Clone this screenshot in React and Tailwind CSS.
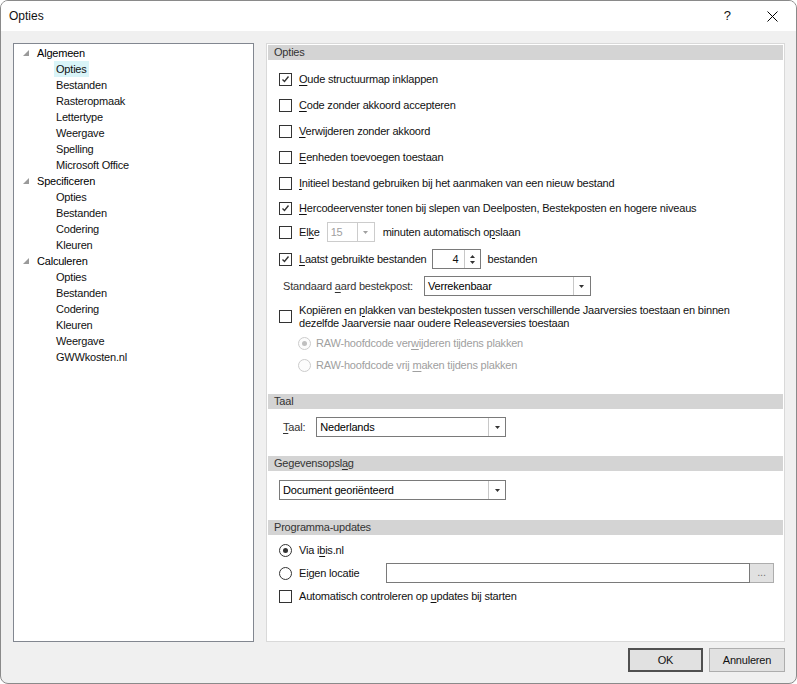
import React from 'react';

const font = { fontFamily: '"Liberation Sans", Arial, sans-serif' };

const U = ({ children }) => <span className="underline underline-offset-[2px]">{children}</span>;

const Check = ({ checked }) => (
  <div className="w-[13px] h-[13px] shrink-0 border border-[#333333] bg-white flex items-center justify-center">
    {checked && (
      <svg width="9" height="9" viewBox="0 0 9 9">
        <polyline points="1.5,4.5 3.5,6.5 7.5,1.5" fill="none" stroke="#333333" strokeWidth="1.4" />
      </svg>
    )}
  </div>
);

const Radio = ({ checked, disabled }) => (
  <div
    className={`w-[13px] h-[13px] shrink-0 rounded-full border flex items-center justify-center ${
      disabled ? 'border-[#cccccc] bg-[#fcfcfc]' : 'border-[#333333] bg-white'
    }`}
  >
    {checked && <div className={`w-[5px] h-[5px] rounded-full ${disabled ? 'bg-[#bfbfbf]' : 'bg-[#333333]'}`} />}
  </div>
);

const Arrow = ({ color = '#333333' }) => (
  <svg width="5" height="3" viewBox="0 0 5 3">
    <polygon points="0,0 5,0 2.5,3" fill={color} />
  </svg>
);

const Select = ({ value, className, disabled }) => (
  <div
    className={`h-[20px] flex bg-white border ${disabled ? 'border-[#cccccc] text-[#a0a0a0]' : 'border-[#7a7a7a] text-black'} ${className}`}
  >
    <div className="flex-1 px-[3px] flex items-center">{value}</div>
    <div className={`w-[17px] border-l flex items-center justify-center ${disabled ? 'border-[#cccccc]' : 'border-[#c8c8c8]'}`}>
      <Arrow color={disabled ? '#a0a0a0' : '#333333'} />
    </div>
  </div>
);

const Header = ({ children }) => (
  <div className="h-[15px] mx-px bg-[#d4d4d4] text-[#333333] pl-[6px] flex items-center leading-none">{children}</div>
);

const Row = ({ h, children, className = '' }) => (
  <div className={`flex items-center pl-[12px] ${className}`} style={{ height: h }}>
    {children}
  </div>
);

const TreeParent = ({ label }) => (
  <div className="h-[16px] flex items-center">
    <div className="w-[23px] flex justify-end pr-[8px]">
      <svg width="6" height="6" viewBox="0 0 6 6">
        <polygon points="6,0 6,6 0,6" fill="#9a9a9a" />
      </svg>
    </div>
    <span className="text-black">{label}</span>
  </div>
);

const TreeChild = ({ label, selected }) => (
  <div className="h-[16px] flex items-center pl-[40px]">
    <span className={`px-[2px] h-[16px] flex items-center ${selected ? 'bg-[#d9f4f8]' : ''}`}>{label}</span>
  </div>
);

export default function App() {
  const tree = [
    ['Algemeen', ['Opties', 'Bestanden', 'Rasteropmaak', 'Lettertype', 'Weergave', 'Spelling', 'Microsoft Office']],
    ['Specificeren', ['Opties', 'Bestanden', 'Codering', 'Kleuren']],
    ['Calculeren', ['Opties', 'Bestanden', 'Codering', 'Kleuren', 'Weergave', 'GWWkosten.nl']],
  ];

  return (
    <div
      className="w-[797px] h-[684px] bg-[#f0f0f0] border border-[#8a8a8a] rounded-[8px] overflow-hidden flex flex-col text-[11px] tracking-[-0.2px] text-[#111111]"
      style={font}
    >
      {/* title bar */}
      <div className="h-[30px] bg-white flex items-center shrink-0">
        <span className="pl-[8px] text-[12px] tracking-normal">Opties</span>
        <span className="ml-auto text-[13px] tracking-normal mr-[36px]">?</span>
        <svg width="11" height="11" viewBox="0 0 11 11" className="mr-[18px]">
          <path d="M0.5 0.5 L10.5 10.5 M10.5 0.5 L0.5 10.5" stroke="#000" strokeWidth="1" />
        </svg>
      </div>

      <div className="flex gap-[12px] pl-[12px] pt-[12px]">
        {/* tree */}
        <div className="w-[241px] h-[599px] bg-white border border-[#828790] pt-[1px]">
          {tree.map(([p, kids], i) => (
            <div key={i}>
              <TreeParent label={p} />
              {kids.map((k, j) => (
                <TreeChild key={j} label={k} selected={i === 0 && j === 0} />
              ))}
            </div>
          ))}
        </div>

        {/* options */}
        <div className="w-[519px] h-[599px] bg-white border border-[#d9d9d9] pt-px flex flex-col">
          <Header>Opties</Header>
          <div className="h-[6px]" />
          <Row h={26}>
            <Check checked />
            <span className="ml-[7px]"><U>O</U>ude structuurmap inklappen</span>
          </Row>
          <Row h={26}>
            <Check />
            <span className="ml-[7px]"><U>C</U>ode zonder akkoord accepteren</span>
          </Row>
          <Row h={26}>
            <Check />
            <span className="ml-[7px]"><U>V</U>erwijderen zonder akkoord</span>
          </Row>
          <Row h={26}>
            <Check />
            <span className="ml-[7px]"><U>E</U>enheden toevoegen toestaan</span>
          </Row>
          <Row h={26}>
            <Check />
            <span className="ml-[7px]"><U>I</U>nitieel bestand gebruiken bij het aanmaken van een nieuw bestand</span>
          </Row>
          <Row h={24}>
            <Check checked />
            <span className="ml-[7px]"><U>H</U>ercodeervenster tonen bij slepen van Deelposten, Bestekposten en hogere niveaus</span>
          </Row>
          <Row h={24}>
            <Check />
            <span className="ml-[7px]">El<U>k</U>e</span>
            <Select value="15" disabled className="ml-[7px] w-[48px] h-[19px]" />
            <span className="ml-[8px]">minuten automatisch o<U>p</U>slaan</span>
          </Row>
          <Row h={30}>
            <Check checked />
            <span className="ml-[7px]"><U>L</U>aatst gebruikte bestanden</span>
            <div className="ml-[5px] w-[49px] h-[20px] border border-[#7a7a7a] flex">
              <div className="flex-1 flex items-center justify-end pr-[5px]">4</div>
              <div className="w-[16px] border-l border-[#c8c8c8] flex flex-col items-center justify-center gap-[3px]">
                <svg width="5" height="3" viewBox="0 0 5 3"><polygon points="2.5,0 5,3 0,3" fill="#333" /></svg>
                <svg width="5" height="3" viewBox="0 0 5 3"><polygon points="0,0 5,0 2.5,3" fill="#333" /></svg>
              </div>
            </div>
            <span className="ml-[7px]">bestanden</span>
          </Row>
          <Row h={24} className="pl-[16px]">
            <span className="text-[#333333]">Standaard <U>a</U>ard bestekpost:</span>
            <Select value="Verrekenbaar" className="ml-[11px] w-[167px] h-[19px]" />
          </Row>
          <div className="flex items-center pl-[12px] mt-[5px] h-[27px]">
            <Check />
            <div className="ml-[7px] leading-[13px]">
              <div>Kopiëren en <U>p</U>lakken van bestekposten tussen verschillende Jaarversies toestaan en binnen</div>
              <div>dezelfde Jaarversie naar oudere Releaseversies toestaan</div>
            </div>
          </div>
          <div className="h-px" />
          <Row h={24} className="pl-[31px] text-[#a0a0a0]">
            <Radio checked disabled />
            <span className="ml-[5px]">RAW-hoofdcode ver<U>w</U>ijderen tijdens plakken</span>
          </Row>
          <Row h={20} className="pl-[31px] text-[#a0a0a0]">
            <Radio disabled />
            <span className="ml-[5px]">RAW-hoofdcode vrij <U>m</U>aken tijdens plakken</span>
          </Row>

          <div className="mt-[19px]">
            <Header>Taal</Header>
          </div>
          <Row h={20} className="mt-[8px] pl-[16px]">
            <span className="text-[#333333]"><U>T</U>aal:</span>
            <Select value="Nederlands" className="ml-[11px] w-[190px]" />
          </Row>

          <div className="mt-[19px]">
            <Header>Gegevensopsl<U>a</U>g</Header>
          </div>
          <Row h={20} className="mt-[9px]">
            <Select value="Document georiënteerd" className="w-[227px]" />
          </Row>

          <div className="mt-[20px]">
            <Header>Programma-updates</Header>
          </div>
          <Row h={22} className="mt-[4px]">
            <Radio checked />
            <span className="ml-[7px]">Via i<U>b</U>is.nl</span>
          </Row>
          <Row h={24}>
            <Radio />
            <span className="ml-[7px] w-[87px]">Ei<U>g</U>en locatie</span>
            <div className="w-[364px] h-[20px] border border-[#7a7a7a] bg-white" />
            <div className="w-[24px] h-[20px] border border-[#adadad] border-l-0 bg-[#e1e1e1] flex items-end justify-center pb-[4px] text-[#777] leading-none">...</div>
          </Row>
          <Row h={22}>
            <Check />
            <span className="ml-[7px]">Automatisch controleren op <U>u</U>pdates bij starten</span>
          </Row>
        </div>
      </div>

      {/* buttons */}
      <div className="flex justify-end gap-[6px] pr-[11px] pt-[6px]">
        <button className="w-[75px] h-[24px] border-2 border-[#505050] bg-[#e1e1e1] text-[11px]" style={font}>OK</button>
        <button className="w-[76px] h-[24px] border border-[#adadad] bg-[#e1e1e1] text-[11px]" style={font}>Annuleren</button>
      </div>
    </div>
  );
}
